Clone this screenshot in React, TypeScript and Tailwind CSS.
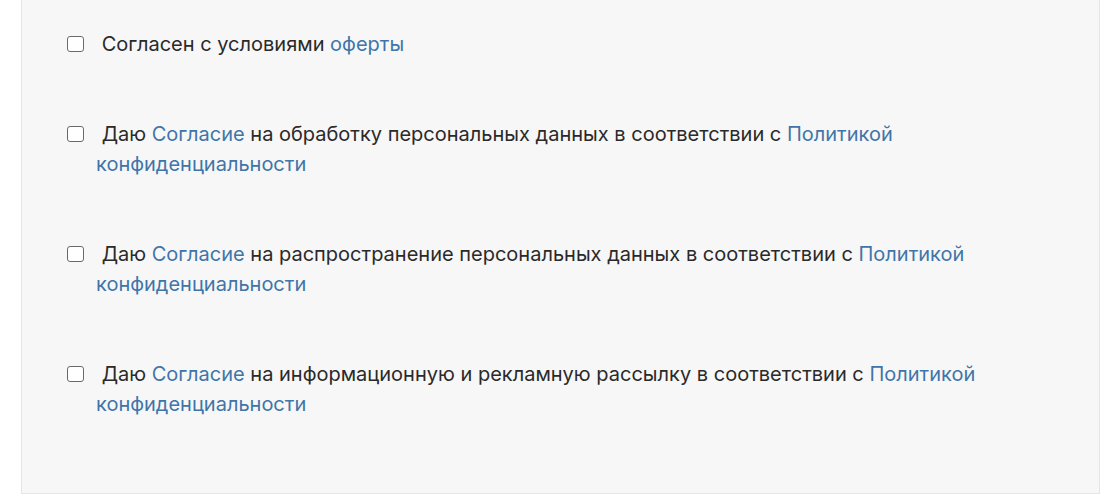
const items = [
    {pre: 'Согласен с условиями ', link: 'оферты', post: '', policy: false},
    {pre: 'Даю ', link: 'Согласие', post: ' на обработку персональных данных в соответствии с ', policy: true},
    {pre: 'Даю ', link: 'Согласие', post: ' на распространение персональных данных в соответствии с ', policy: true},
    {pre: 'Даю ', link: 'Согласие', post: ' на информационную и рекламную рассылку в соответствии с ', policy: true},
];

function Agreement({pre, link, post, policy}: (typeof items)[number]) {
    return (
        <label className="flex items-start pl-[45px] pr-[40px] cursor-pointer">
            <span className="mt-[7px] mr-[12px] w-[17px] h-[16px] shrink-0 rounded-[3px] border-[1.5px] border-[#6a6a6a] bg-white" />
            <span className="text-[20px] leading-[30px] text-[#2a2a2a]">
                {'\u00a0'}
                {pre}
                <a className="text-[#3f75a8]">{link}</a>
                {post}
                {policy && <a className="text-[#3f75a8]">Политикой конфиденциальности</a>}
            </span>
        </label>
    );
}

export default function App() {
    return (
        <div className="min-h-screen bg-white pl-[21px] pr-[13px] font-['Inter','Noto_Sans',sans-serif]">
            <div className="flex flex-col gap-[60px] bg-[#f7f7f7] border-x border-b border-[#e6e6e6] pt-[29px] pb-[74px]">
                {items.map((item, i) => (
                    <Agreement key={i} {...item} />
                ))}
            </div>
        </div>
    );
}
